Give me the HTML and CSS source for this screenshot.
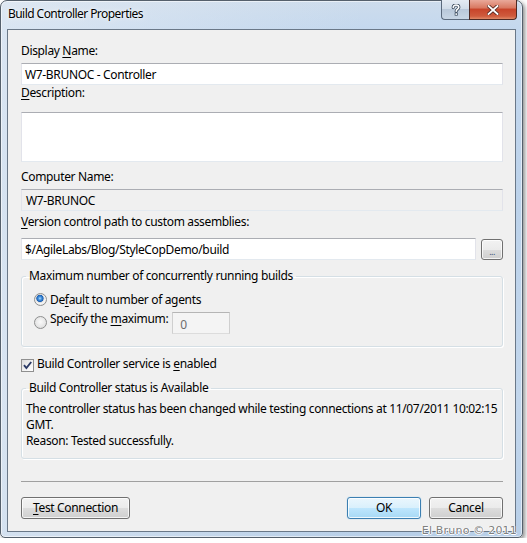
FILE: index.html
```html
<!DOCTYPE html>
<html>
<head>
<meta charset="utf-8">
<title>Build Controller Properties</title>
<link rel="stylesheet" href="styles.css">
</head>
<body>
<div class="window">
  <div class="titlebar">
    <span class="title">Build Controller Properties</span>
    <div class="caption">
      <div class="cbtn help">
        <svg width="10" height="12" viewBox="0 0 10 12"><path d="M2.2 3.6 C2.2 1.6 3.6 1 5 1 C6.6 1 7.8 1.9 7.8 3.3 C7.8 5.2 5.2 5.2 5.2 7.3" fill="none" stroke="#3a4a5c" stroke-width="3.2" stroke-linecap="round"/><path d="M2.2 3.6 C2.2 1.6 3.6 1 5 1 C6.6 1 7.8 1.9 7.8 3.3 C7.8 5.2 5.2 5.2 5.2 7.3" fill="none" stroke="#fff" stroke-width="1.6" stroke-linecap="round"/><rect x="3.7" y="8.6" width="3" height="3" fill="#3a4a5c"/><rect x="4.4" y="9.3" width="1.6" height="1.6" fill="#fff"/></svg>
      </div>
      <div class="cbtn close">
        <svg width="12" height="10" viewBox="0 0 12 10"><path d="M1.5 1 L10.5 9 M10.5 1 L1.5 9" stroke="#5a2a22" stroke-width="3.6" stroke-linecap="square"/><path d="M1.5 1 L10.5 9 M10.5 1 L1.5 9" stroke="#fff" stroke-width="1.8" stroke-linecap="square"/></svg>
      </div>
    </div>
  </div>
  <div class="client">
    <div class="lbl lbl-display">Display <u>N</u>ame:</div>
    <div class="tb tb-display">W7-BRUNOC - Controller</div>
    <div class="lbl lbl-desc"><u>D</u>escription:</div>
    <div class="tb tb-desc"></div>
    <div class="lbl lbl-comp">Computer Name:</div>
    <div class="tb tb-ro tb-comp">W7-BRUNOC</div>
    <div class="lbl lbl-path"><u>V</u>ersion control path to custom assemblies:</div>
    <div class="pathrow">
      <div class="tb tb-path">$/AgileLabs/Blog/StyleCopDemo/build</div>
      <button class="btn browse">...</button>
    </div>
    <fieldset class="group group-max">
      <legend>Maximum number of concurrently running builds</legend>
      <div class="radio-row row-default"><span class="radio checked"></span><span>De<u>f</u>ault to number of agents</span></div>
      <div class="radio-row row-specify"><span class="radio"></span><span>Specify the <u>m</u>aximum:</span><div class="tb tb-num">0</div></div>
    </fieldset>
    <div class="check-row">
      <span class="checkbox"><svg width="11" height="11" viewBox="0 0 11 11"><path d="M2 5.2 L4.4 8 L9.2 2" fill="none" stroke="#2b3a66" stroke-width="1.9"/></svg></span>
      <span>Build Controller service is <u>e</u>nabled</span>
    </div>
    <fieldset class="group group-status">
      <legend>Build Controller status is Available</legend>
      <div class="status-line">The controller status has been changed while testing connections at 11/07/2011 10:02:15</div>
      <div class="status-line">GMT.</div>
      <div class="status-line">Reason: Tested successfully.</div>
    </fieldset>
    <div class="sep"></div>
    <div class="buttons">
      <button class="btn btn-test"><u>T</u>est Connection</button>
      <button class="btn btn-ok">OK</button>
      <button class="btn btn-cancel">Cancel</button>
    </div>
  </div>
  <div class="watermark">El Bruno © 2011</div>
</div>
</body>
</html>
```
FILE: styles.css
```css
* { box-sizing: border-box; }
html, body { margin: 0; padding: 0; background: #fff; }
body {
  font-family: "Noto Sans", "Open Sans", sans-serif;
  font-size: 12px;
  line-height: 16px;
  letter-spacing: -0.34px;
  color: #000;
}
u { text-decoration-thickness: 1px; text-underline-offset: 2px; }

.window {
  position: relative;
  width: 523px;
  height: 538px;
  border: 1px solid #55606c;
  border-radius: 7px 7px 5px 5px;
  background:
    linear-gradient(90deg, rgba(235,240,246,0.55) 0, rgba(225,233,242,0.25) 45%, rgba(255,255,255,0) 70%),
    linear-gradient(180deg, #cddcec 0, #c4d8ee 28px, #bcd2ea 200px, #c2d6ec 400px, #b8cfe8 100%);
  box-shadow: 2px 2px 4px rgba(0,0,0,0.45), inset 0 0 0 1px rgba(255,255,255,0.55);
  display: flex;
  flex-direction: column;
}

.titlebar {
  height: 28px;
  display: flex;
  align-items: flex-start;
  padding: 0 5px 0 7px;
}
.title {
  margin-top: 5px;
  letter-spacing: -0.55px;
  color: #000;
  text-shadow: 0 0 6px rgba(255,255,255,0.9), 0 0 2px rgba(255,255,255,0.9);
}
.caption {
  margin-left: auto;
  display: flex;
  margin-top: -1px;
}
.cbtn {
  height: 20px;
  display: flex;
  align-items: center;
  justify-content: center;
  border: 1px solid #5b6a7c;
  border-top: none;
}
.help {
  width: 28px;
  border-radius: 0 0 0 4px;
  border-right: none;
  background: linear-gradient(180deg, #e4ebf3 0, #d2dde9 45%, #b9c8d9 50%, #c8d6e5 100%);
}
.close {
  width: 48px;
  border-radius: 0 0 4px 0;
  border-color: #4e2a24;
  background: linear-gradient(180deg, #e9a99a 0, #d97a63 40%, #c8452b 50%, #cf5b3d 85%, #e08a68 100%);
}

.client {
  margin: 0 6px 5px 6px;
  height: 503px;
  border: 1px solid #6a7888;
  background: #f0f0f0;
  padding: 13px 12px 11px 13px;
  display: flex;
  flex-direction: column;
}

.tb {
  height: 22px;
  border: 1px solid;
  border-color: #abadb3 #e2e3ea #e3e9ef #e2e3ea;
  background: #fff;
  padding: 3px 3px 0 3px;
  white-space: nowrap;
  flex: none;
}

.lbl { height: 16px; white-space: nowrap; flex: none; }
.lbl-display { margin-bottom: 4px; }
.lbl-desc { margin-top: 0; }
.tb.tb-desc { margin-top: 11px; height: 50px; }
.lbl-comp { margin-top: 7px; }
.tb.tb-comp { margin-top: 4px; }
.lbl-path { margin-top: 3px; }
.pathrow { margin-top: 8px; display: flex; align-items: flex-start; flex: none; }

.tb.tb-ro { background: #f0f0f0; padding-left: 4px; }
.tb.tb-path { width: 455px; }

.btn {
  height: 22px;
  border: 1px solid #707070;
  border-radius: 3px;
  background: linear-gradient(180deg, #f2f2f2 0, #ebebeb 50%, #dddddd 50%, #cfcfcf 100%);
  box-shadow: inset 0 0 0 1px rgba(255,255,255,0.75);
  font: inherit;
  letter-spacing: inherit;
  color: #000;
  padding: 0;
  margin: 0;
}
.btn.browse {
  width: 22px;
  height: 21px;
  margin-left: 5px;
  margin-top: 1px;
  font-size: 9px;
  line-height: 10px;
  color: #3a4f7a;
  letter-spacing: -0.5px;
  padding-top: 4px;
}

.group {
  margin: 0;
  border: 1px solid #d5dfe5;
  border-radius: 3px;
  padding: 0 4px;
  min-width: 0;
  flex: none;
  box-shadow: inset 1px 1px 0 #fff, 1px 1px 0 #fff;
}
.group legend {
  padding: 0 3px;
  height: 16px;
  line-height: 16px;
  white-space: nowrap;
}
.group-max { margin-top: 8px; padding-top: 8px; padding-bottom: 12px; }
.group-status { margin-top: 8px; padding-top: 5px; padding-bottom: 9px; }

.radio-row {
  display: flex;
  align-items: flex-start;
  margin-left: 8px;
  white-space: nowrap;
}
.row-specify { margin-top: 3px; }
.radio {
  width: 13px;
  height: 13px;
  border-radius: 50%;
  border: 1px solid #8e8f8f;
  background: radial-gradient(circle at 50% 45%, #fafafa 0, #e6e6e6 60%, #d2d2d2 100%);
  margin-right: 3px;
  margin-top: 1px;
  flex: none;
}
.row-specify .radio { margin-top: 5px; }
.radio.checked {
  background: radial-gradient(circle at 45% 40%, #b6defc 0, #4a98e2 1.5px, #1a5fb4 3.3px, #d8d8d8 3.9px, #f6f6f6 5px, #dcdcdc 100%);
}
.tb.tb-num {
  width: 58px;
  margin-left: 4px;
  margin-top: 1px;
  background: #f4f4f4;
  border-color: #b5b5b5 #cfcfcf #dcdcdc #cfcfcf;
  color: #6d6d6d;
  padding-left: 7px;
  padding-top: 4px;
}

.check-row {
  margin-top: 9px;
  display: flex;
  align-items: flex-start;
  white-space: nowrap;
  flex: none;
}
.checkbox {
  width: 13px;
  height: 13px;
  border: 1px solid #8f8f8f;
  background: linear-gradient(135deg, #dcdcdc 0, #f4f4f4 60%, #ffffff 100%);
  margin-top: 3px;
  margin-right: 3px;
  display: flex;
  flex: none;
}
.checkbox svg { display: block; }

.status-line { white-space: nowrap; height: 16px; }

.sep {
  margin-top: 22px;
  height: 1px;
  background: #a0a0a0;
  flex: none;
}

.buttons {
  margin-top: 15px;
  display: flex;
  gap: 8px;
  flex: none;
}
.btn.btn-test { width: 109px; margin-right: auto; }
.btn.btn-ok {
  width: 74px;
  border-color: #3c7fb1;
  background: linear-gradient(180deg, #eaf6fd 0, #d9f0fc 50%, #bee6fd 50%, #a7d9f5 100%);
  box-shadow: inset 0 0 0 1px rgba(255,255,255,0.8), 0 0 1px #6bb7e8;
}
.btn.btn-cancel { width: 74px; }

.watermark {
  position: absolute;
  right: 5px;
  bottom: 0;
  font-family: "DejaVu Sans", sans-serif;
  font-size: 11px;
  line-height: 13px;
  color: #808080;
  letter-spacing: 0.2px;
  text-shadow: 1px 0 0 #fff, -1px 0 0 #fff, 0 1px 0 #fff;
}
```
